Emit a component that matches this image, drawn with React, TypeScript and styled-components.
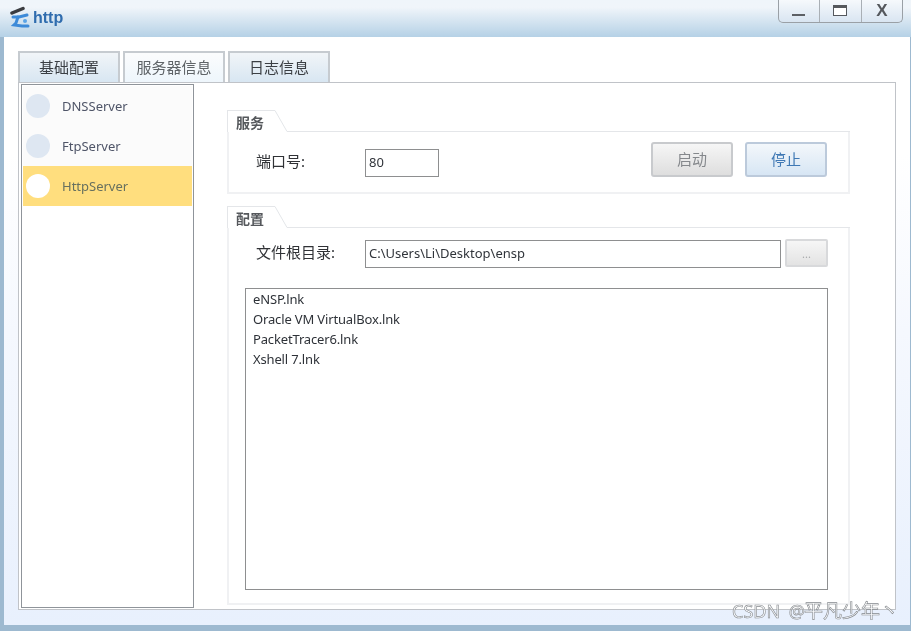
import { createGlobalStyle, styled } from 'styled-components';

const servers = [
    { name: 'DNSServer', active: false },
    { name: 'FtpServer', active: false },
    { name: 'HttpServer', active: true },
];

const files = ['eNSP.lnk', 'Oracle VM VirtualBox.lnk', 'PacketTracer6.lnk', 'Xshell 7.lnk'];

function Legend({ title }: { title: string }) {
    return (
        <GroupHead>
            <LegendLabel>{title}</LegendLabel>
            <svg width="20" height="22" viewBox="0 0 20 22">
                <path d="M0 .5H5L17 21.5H20" fill="none" stroke="#e4e6e9" />
            </svg>
            <LegendLine />
        </GroupHead>
    );
}

export default function App() {
    return (
        <Window>
            <GlobalStyle />
            <TitleBar>
                <TitleLeft>
                    <svg width="20" height="24" viewBox="0 0 20 24">
                        <path d="M2 7 13 2.5" stroke="#3a3c40" strokeWidth="3.5" strokeLinecap="round" />
                        <path d="M3 11H9L17 9" fill="none" stroke="#3d8ad8" strokeWidth="3" strokeLinecap="round" />
                        <path d="M8 11 6 17 4 19 12 20H18" fill="none" stroke="#3d8ad8" strokeWidth="3" strokeLinecap="round" />
                        <circle cx="15" cy="15" r="2" fill="#5ba4e6" />
                    </svg>
                    <TitleText>http</TitleText>
                </TitleLeft>
                <WindowControls>
                    <ControlButton>
                        <svg width="14" height="14" viewBox="0 0 14 14">
                            <rect x="0" y="10" width="13" height="2" fill="#5d6065" />
                        </svg>
                    </ControlButton>
                    <ControlButton>
                        <svg width="14" height="12" viewBox="0 0 14 12">
                            <rect x=".5" y=".5" width="13" height="10" fill="#fff" stroke="#55585d" />
                            <rect x="0" y="0" width="14" height="3" fill="#55585d" />
                        </svg>
                    </ControlButton>
                    <ControlButton $last>X</ControlButton>
                </WindowControls>
            </TitleBar>

            <Body>
                <TabBar>
                    <Tab>基础配置</Tab>
                    <Tab $active>服务器信息</Tab>
                    <Tab>日志信息</Tab>
                </TabBar>
                <Pane>
                    <Sidebar>
                        {servers.map((s) => (
                            <ServerRow key={s.name} $active={s.active}>
                                <ServerDot $active={s.active} />
                                <span>{s.name}</span>
                            </ServerRow>
                        ))}
                    </Sidebar>
                    <Content>
                        <Group>
                            <Legend title="服务" />
                            <ServiceBody>
                                <PortLabel>端口号:</PortLabel>
                                <PortInput>80</PortInput>
                                <Actions>
                                    <ActionButton>启动</ActionButton>
                                    <ActionButton $primary>停止</ActionButton>
                                </Actions>
                            </ServiceBody>
                        </Group>
                        <Group $grow>
                            <Legend title="配置" />
                            <ConfigBody>
                                <PathRow>
                                    <PathLabel>文件根目录:</PathLabel>
                                    <PathInput>C:\Users\Li\Desktop\ensp</PathInput>
                                    <BrowseButton>...</BrowseButton>
                                </PathRow>
                                <FileList>
                                    {files.map((f) => (
                                        <FileItem key={f}>{f}</FileItem>
                                    ))}
                                </FileList>
                            </ConfigBody>
                        </Group>
                    </Content>
                </Pane>
            </Body>
            <Watermark>
                CSDN @<WatermarkName>平凡少年丶</WatermarkName>
            </Watermark>
        </Window>
    );
}

const GlobalStyle = createGlobalStyle`
    html, body {
        margin: 0;
        padding: 0;
        background: #fff;
    }
    * {
        box-sizing: border-box;
    }
`;

const Window = styled.div`
    position: relative;
    width: 911px;
    height: 631px;
    display: flex;
    flex-direction: column;
    overflow: hidden;
    font-family: 'Noto Sans', 'Noto Sans CJK SC', sans-serif;
    font-size: 13px;
    background: #9db9d0;
    filter: blur(0.4px);
`;

const TitleBar = styled.div`
    height: 37px;
    flex: none;
    display: flex;
    justify-content: space-between;
    align-items: flex-start;
    padding: 0 8px 0 10px;
    background: linear-gradient(#eff5fa, #f0f5fa 20%, #b5d1e6);
`;

const TitleLeft = styled.div`
    display: flex;
    align-items: center;
    gap: 3px;
    height: 36px;
`;

const TitleText = styled.div`
    font-family: 'Liberation Sans', sans-serif;
    font-size: 16px;
    font-weight: 700;
    color: #2f6cae;
`;

const WindowControls = styled.div`
    display: flex;
    height: 23px;
    width: 125px;
    border: 1px solid #9aa0a6;
    border-top: none;
    border-radius: 0 0 5px 5px;
    background: linear-gradient(#f6f9fc, #d9e5f1);
`;

const ControlButton = styled.div<{ $last?: boolean }>`
    flex: 1;
    display: flex;
    align-items: center;
    justify-content: center;
    font-family: 'Liberation Sans', sans-serif;
    font-size: 17px;
    font-weight: 700;
    color: #55585d;
    border-right: ${(p) => (p.$last ? 'none' : '1px solid #a9afb5')};
`;

const Body = styled.div`
    flex: none;
    height: 588px;
    margin: 0 1px 0 4px;
    padding: 14px 14px 15px 14px;
    display: flex;
    flex-direction: column;
    background: linear-gradient(#fff, #fff 20%, #f5f8fe 50%, #e8f0fd);
`;

const TabBar = styled.div`
    display: flex;
    gap: 3px;
    height: 31px;
    flex: none;
`;

const Tab = styled.div<{ $active?: boolean }>`
    width: 102px;
    display: flex;
    align-items: center;
    justify-content: center;
    padding-bottom: 2px;
    font-size: 15px;
    color: ${(p) => (p.$active ? '#5f6468' : '#3b3f44')};
    border: 2px solid #c6cbd0;
    border-bottom: none;
    background: ${(p) => (p.$active ? 'linear-gradient(#fbfcfd, #eef6fc)' : 'linear-gradient(#f1f5f8, #d8e6f2)')};
`;

const Pane = styled.div`
    flex: 1;
    display: flex;
    min-height: 0;
    padding: 1px 0 1px 2px;
    background: #fff;
    border: 1px solid #c0c3c8;
`;

const Sidebar = styled.div`
    width: 173px;
    flex: none;
    padding: 1px;
    border: 1px solid #8f949a;
    background: #fff;
`;

const ServerRow = styled.div<{ $active: boolean }>`
    height: 40px;
    display: flex;
    align-items: center;
    gap: 12px;
    padding-left: 3px;
    font-size: 13px;
    color: ${(p) => (p.$active ? '#67705f' : '#4f5568')};
    background: ${(p) => (p.$active ? '#ffde7e' : '#fbfbfb')};
`;

const ServerDot = styled.div<{ $active: boolean }>`
    width: 24px;
    height: 24px;
    border-radius: 50%;
    background: ${(p) => (p.$active ? '#fff' : '#dee7f2')};
`;

const Content = styled.div`
    flex: 1;
    display: flex;
    flex-direction: column;
    gap: 12px;
    padding: 26px 45px 3px 33px;
`;

const Group = styled.div<{ $grow?: boolean }>`
    display: flex;
    flex-direction: column;
    flex: ${(p) => (p.$grow ? '1' : 'none')};
    min-height: 0;
`;

const GroupHead = styled.div`
    height: 22px;
    flex: none;
    display: flex;
`;

const LegendLabel = styled.div`
    width: 43px;
    padding-left: 8px;
    font-size: 14px;
    font-weight: 700;
    line-height: 24px;
    color: #55585c;
    border: 1px solid #e4e6e9;
    border-bottom: none;
    border-right: none;
`;

const LegendLine = styled.div`
    flex: 1;
    border-bottom: 1px solid #e4e6e9;
`;

const ServiceBody = styled.div`
    height: 62px;
    display: flex;
    align-items: flex-start;
    padding: 10px 21px 0 16px;
    border: 2px solid #f0f1f3;
    border-top: none;
`;

const ConfigBody = styled.div`
    flex: 1;
    min-height: 0;
    display: flex;
    flex-direction: column;
    gap: 20px;
    padding: 12px 20px 13px 16px;
    border: 2px solid #f0f1f3;
    border-top: none;
`;

const FieldLabel = styled.div`
    width: 120px;
    padding-left: 11px;
    flex: none;
    font-size: 15px;
    color: #303236;
    line-height: 28px;
`;

const PortLabel = styled(FieldLabel)`
    margin-top: 5px;
`;

const PathLabel = styled(FieldLabel)`
    margin-top: -2px;
`;

const TextBox = styled.div`
    height: 28px;
    line-height: 24px;
    padding-left: 3px;
    font-size: 13px;
    color: #30343a;
    background: #fff;
    border: 1px solid #8e8f90;
`;

const PortInput = styled(TextBox)`
    width: 74px;
    margin-top: 7px;
`;

const Actions = styled.div`
    margin-left: auto;
    display: flex;
    gap: 12px;
`;

const ActionButton = styled.div<{ $primary?: boolean }>`
    width: 82px;
    height: 35px;
    display: flex;
    align-items: center;
    justify-content: center;
    padding-bottom: 3px;
    font-size: 15px;
    color: ${(p) => (p.$primary ? '#3f78b4' : '#85888c')};
    border: 2px solid ${(p) => (p.$primary ? '#bccadb' : '#c8cacd')};
    border-radius: 3px;
    background: ${(p) => (p.$primary ? 'linear-gradient(#f3f7fb, #d7e6f4)' : 'linear-gradient(#f6f6f6, #dedede)')};
`;

const PathRow = styled.div`
    display: flex;
    align-items: flex-start;
`;

const PathInput = styled(TextBox)`
    width: 416px;
    flex: none;
`;

const BrowseButton = styled.div`
    width: 43px;
    height: 28px;
    margin: -1px 0 0 4px;
    flex: none;
    display: flex;
    align-items: center;
    justify-content: center;
    font-size: 11px;
    color: #a9abad;
    border: 2px solid #d8d9db;
    border-radius: 2px;
    background: linear-gradient(#f6f6f6, #e3e3e3);
`;

const FileList = styled.div`
    flex: 1;
    min-height: 0;
    padding: 0 7px;
    background: #fff;
    border: 1px solid #8e8f90;
`;

const FileItem = styled.div`
    height: 20px;
    line-height: 20px;
    font-size: 13px;
    letter-spacing: -0.15px;
    color: #2e3238;
`;

const Watermark = styled.div`
    position: absolute;
    left: 732px;
    top: 599px;
    font-size: 18px;
    line-height: 24px;
    word-spacing: 4px;
    color: rgba(255, 255, 255, 0.75);
    -webkit-text-stroke: 0.6px #85898d;
    white-space: nowrap;
`;

const WatermarkName = styled.span`
    font-size: 19px;
    margin-left: -1px;
`;
